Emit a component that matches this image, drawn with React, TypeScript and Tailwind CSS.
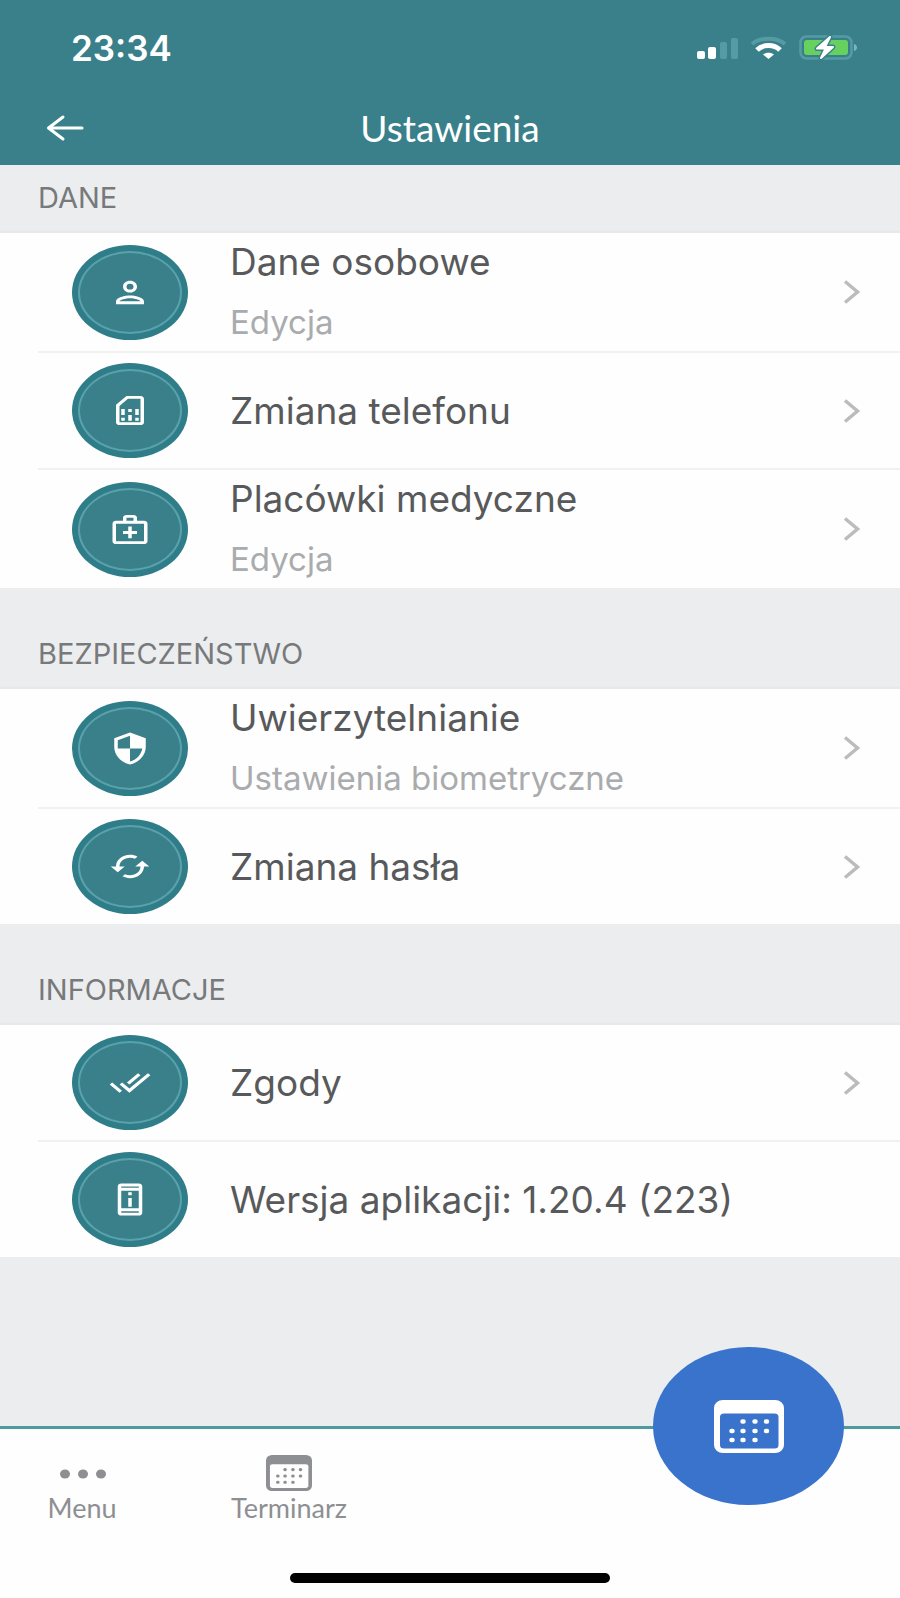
import type { ReactNode } from 'react'

type Item = {
  title: string
  subtitle?: string
  icon: string
  link?: boolean
}

type Section = {
  label: string
  items: Item[]
}

const icons = {
  person:
    'M12 6a2 2 0 1 1 0 4 2 2 0 0 1 0-4m0 10c2.7 0 5.8 1.29 6 2H6c.23-.72 3.31-2 6-2m0-12C9.79 4 8 5.79 8 8s1.79 4 4 4 4-1.79 4-4-1.79-4-4-4zm0 10c-2.67 0-8 1.34-8 4v2h16v-2c0-2.66-5.33-4-8-4z',
  sim: 'M19.99 4c0-1.1-.89-2-1.99-2h-8L4 8v12c0 1.1.9 2 2 2h12.01c1.1 0 1.99-.9 1.99-2l-.01-16zM18 20H6V8.83L10.83 4H18v16zM7 17h2v2H7zM15 17h2v2h-2zM7 11h2v4H7zM11 15h2v4h-2zM11 11h2v2h-2zM15 11h2v4h-2z',
  medical:
    'M20 6h-4V4c0-1.1-.9-2-2-2h-4c-1.1 0-2 .9-2 2v2H4c-1.1 0-2 .9-2 2v12c0 1.1.9 2 2 2h16c1.1 0 2-.9 2-2V8c0-1.1-.9-2-2-2zM10 4h4v2h-4V4zm10 16H4V8h16v12zM13 10h-2v3H8v2h3v3h2v-3h3v-2h-3z',
  shield:
    'M12 1L3 5v6c0 5.55 3.84 10.74 9 12 5.16-1.26 9-6.45 9-12V5l-9-4zm0 10.99h7c-.53 4.12-3.28 7.79-7 8.94V12H5V6.3l7-3.11v8.8z',
  refresh:
    'M19 8l-4 4h3c0 3.31-2.69 6-6 6-1.01 0-1.97-.25-2.8-.7l-1.46 1.46C8.97 19.54 10.43 20 12 20c4.42 0 8-3.58 8-8h3l-4-4zM6 12c0-3.31 2.69-6 6-6 1.01 0 1.97.25 2.8.7l1.46-1.46C15.03 4.46 13.57 4 12 4c-4.42 0-8 3.58-8 8H1l4 4 4-4H6z',
  checks:
    'M18 7l-1.41-1.41-6.34 6.34 1.41 1.41L18 7zm4.24-1.41L11.66 16.17 7.48 12l-1.41 1.41L11.66 19l12-12-1.42-1.41zM.41 13.41L6 19l1.41-1.41L1.83 12 .41 13.41z',
  device:
    'M13 7h-2v2h2V7zm0 4h-2v6h2v-6zm4-9.99L7 1c-1.1 0-2 .9-2 2v18c0 1.1.9 2 2 2h10c1.1 0 2-.9 2-2V3c0-1.1-.9-1.99-2-1.99zM17 21H7v-1h10v1zm0-3H7V6h10v12zm0-14H7V3h10v1z',
}

const sections: Section[] = [
  {
    label: 'DANE',
    items: [
      { title: 'Dane osobowe', subtitle: 'Edycja', icon: icons.person, link: true },
      { title: 'Zmiana telefonu', icon: icons.sim, link: true },
      { title: 'Placówki medyczne', subtitle: 'Edycja', icon: icons.medical, link: true },
    ],
  },
  {
    label: 'BEZPIECZEŃSTWO',
    items: [
      { title: 'Uwierzytelnianie', subtitle: 'Ustawienia biometryczne', icon: icons.shield, link: true },
      { title: 'Zmiana hasła', icon: icons.refresh, link: true },
    ],
  },
  {
    label: 'INFORMACJE',
    items: [
      { title: 'Zgody', icon: icons.checks, link: true },
      { title: 'Wersja aplikacji: 1.20.4 (223)', icon: icons.device },
    ],
  },
]

// Signal, wifi and battery
function StatusIcons() {
  return (
    <svg width="164" height="28" viewBox="0 0 164 28" fill="none" aria-hidden="true">
      <rect x="1" y="17" width="8" height="8" rx="2" fill="#fff" />
      <rect x="12" y="13" width="8" height="12" rx="2" fill="#fff" />
      <rect x="24" y="8" width="7" height="17" rx="2" fill="#569ba4" />
      <rect x="35" y="4" width="7" height="21" rx="2" fill="#569ba4" />
      <path d="M56 10C64 3 81 3 89 10" stroke="#569ba4" strokeWidth="4" />
      <path d="M61 16C67 10 78 10 84 16" stroke="#fff" strokeWidth="5" />
      <path d="M67 20.5C70 18 75 18 78 20.5L72.5 25Z" fill="#fff" />
      <rect x="104.5" y="2.5" width="51" height="22" rx="6" stroke="#569ba4" strokeWidth="2.5" />
      <rect x="108" y="6" width="44" height="15" rx="3" fill="#66d15f" />
      <path d="M158 10c4 1 4 6 0 7z" fill="#7fb5bc" />
      <path d="M134 3L121 14.5h8.5L125 24l12-11h-8z" fill="#fff" stroke="#3a808b" strokeWidth="5" strokeLinejoin="round" />
      <path d="M134 3L121 14.5h8.5L125 24l12-11h-8z" fill="#fff" stroke="#fff" strokeWidth="2" strokeLinejoin="round" />
    </svg>
  )
}

function CalendarIcon({ className }: { className: string }) {
  return (
    <svg className={className} viewBox="0 0 70 53" preserveAspectRatio="none" fill="currentColor" aria-hidden="true">
      <path
        fillRule="evenodd"
        d="M9 0h52a9 8 0 0 1 9 8v37a9 8 0 0 1-9 8H9a9 8 0 0 1-9-8V8a9 8 0 0 1 9-8zm1 13.5a4 3.5 0 0 0-4 3.5v28a4 3.5 0 0 0 4 3.5h50.500a4 3.5 0 0 0 4-3.5V17a4 3.5 0 0 0-4-3.5z"
      />
      <path
        d="M28.5 21.5h1M40.5 21.5h1M52 21.5h1M17.5 31h1M28.5 31h1M40.5 31h1M52 31h1M17.5 40h1M28.5 40h1M40.5 40h1"
        stroke="currentColor"
        strokeWidth="4.5"
        strokeLinecap="round"
      />
    </svg>
  )
}

function Row({ item }: { item: Item }) {
  const content: ReactNode = (
    <>
      <span className="flex h-[95px] w-[116px] shrink-0 items-center justify-center rounded-[50%] bg-[#2f7d89] p-[6px]">
        <span className="flex h-full w-full items-center justify-center rounded-[50%] border-2 border-[#5aa2ab] bg-[#3a808b] text-white">
          <svg width="42" height="35" viewBox="0 0 24 24" preserveAspectRatio="none" fill="currentColor" fillRule="evenodd" aria-hidden="true">
            <path d={item.icon} />
          </svg>
        </span>
      </span>
      <span className="flex min-w-0 flex-1 flex-col gap-3">
        <span className="text-[37px] leading-12 text-[#58595b]">{item.title}</span>
        {item.subtitle && <span className="text-[33px] leading-12 text-[#a9abad]">{item.subtitle}</span>}
      </span>
      {item.link && (
        <svg width="18" height="26" viewBox="0 0 18 26" fill="none" stroke="#bcbcbc" strokeWidth="3.5" aria-hidden="true">
          <path d="M2 2.500l12.500 10.500L2 23.500" />
        </svg>
      )}
    </>
  )
  const height = item.subtitle ? 'min-h-[118px]' : 'min-h-[115px]'

  return (
    <li className="border-[#f0f1f1] not-first:border-t-2">
      {item.link ? (
        <button type="button" className={`flex w-full items-center gap-[42px] pr-[39px] pl-[34px] text-left ${height}`}>
          {content}
        </button>
      ) : (
        <div className={`flex w-full items-center gap-[42px] pr-[39px] pl-[34px] ${height}`}>{content}</div>
      )}
    </li>
  )
}

function App() {
  return (
    <div className="flex min-h-screen flex-col bg-[#ebedef] font-['Inter',sans-serif]">
      <header className="bg-[#3a808b] text-white">
        <div className="flex h-[92px] items-center justify-between pt-1 pr-10 pl-[71px]">
          <span className="text-[35px] leading-10 font-semibold">23:34</span>
          <StatusIcons />
        </div>
        <div className="grid h-[73px] grid-cols-[84px_1fr_84px] items-center pb-[2px]">
          <button type="button" aria-label="Wstecz" className="flex h-full items-center justify-end">
            <svg width="38" height="28" viewBox="0 0 38 28" fill="none" stroke="currentColor" strokeWidth="3" strokeLinecap="round" strokeLinejoin="round">
              <path d="M36 14H2.500M17 3L2.500 14 17 25" />
            </svg>
          </button>
          <h1 className="text-center font-['Lato',sans-serif] text-[37px] leading-12">Ustawienia</h1>
        </div>
      </header>

      <main className="flex-1">
        {sections.map((section) => (
          <section key={section.label} className="not-first:pt-[33px]">
            <h2 className="border-b-2 border-[#e6e8e9] pl-[38px] text-[29px] leading-[66px] text-[#77797b]">
              {section.label}
            </h2>
            <ul className="bg-[#fefefe] pl-[38px]">
              {section.items.map((item) => (
                <Row key={item.title} item={item} />
              ))}
            </ul>
          </section>
        ))}
      </main>

      <nav className="relative border-t-3 border-[#4f99a1] bg-[#fefefe] pt-[26px] pb-[15px] font-['Lato',sans-serif] text-[27px] leading-[34px] text-[#8e8f92]">
        <div className="flex">
          <button type="button" className="flex w-[164px] flex-col items-center">
            <svg width="48" height="36" viewBox="0 0 48 36" fill="currentColor" aria-hidden="true">
              <ellipse cx="7" cy="19" rx="5" ry="4.5" />
              <ellipse cx="25" cy="19" rx="5" ry="4.5" />
              <ellipse cx="43" cy="19" rx="5" ry="4.5" />
            </svg>
            Menu
          </button>
          <button type="button" className="flex w-[250px] flex-col items-center">
            <CalendarIcon className="h-9 w-[46px]" />
            Terminarz
          </button>
        </div>
        <button
          type="button"
          aria-label="Kalendarz"
          className="absolute -top-[82px] right-[56px] flex h-[158px] w-[191px] items-center justify-center rounded-[50%] bg-[#3973cb] text-white"
        >
          <CalendarIcon className="h-[53px] w-[70px]" />
        </button>
        <div className="mx-auto mt-12 h-[10px] w-[320px] rounded-full bg-black" />
      </nav>
    </div>
  )
}

export default App
